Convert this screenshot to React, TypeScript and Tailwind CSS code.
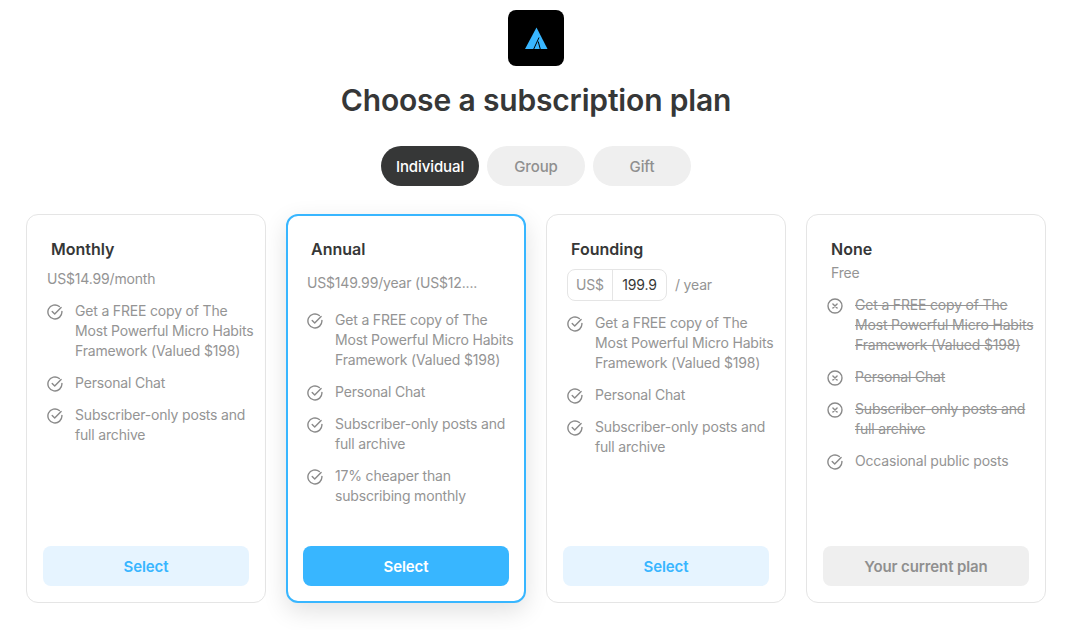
const FEATURES = ["Get a FREE copy of The Most Powerful Micro Habits Framework (Valued $198)", "Personal Chat", "Subscriber-only posts and full archive"];

function Check() {
  return (
    <svg width="16" height="16" viewBox="0 0 16 16" fill="none" stroke="#8a8a8a" strokeWidth="1.4" strokeLinecap="round" strokeLinejoin="round" className="mt-[3px] shrink-0">
      <path d="M14.9 7.4a7 7 0 1 1-2.6-4.9" />
      <path d="M5.2 7.5l2.5 2.5 6.4-6.6" />
    </svg>
  );
}

function Cross() {
  return (
    <svg width="16" height="16" viewBox="0 0 16 16" fill="none" stroke="#8a8a8a" strokeWidth="1.4" strokeLinecap="round" className="mt-[3px] shrink-0">
      <circle cx="8" cy="8" r="7" />
      <path d="M5.9 5.9l4.2 4.2M10.1 5.9l-4.2 4.2" />
    </svg>
  );
}

function Item({ text, off }: { text: string; off?: boolean }) {
  return (
    <li className="flex gap-3 text-[14px] leading-5 tracking-[-0.18px] text-[#949494]">
      {off ? <Cross /> : <Check />}
      <span className={off ? "line-through" : ""}>{text}</span>
    </li>
  );
}

function Card({ title, children, items, button, highlight }: { title: string; children: React.ReactNode; items: React.ReactNode; button: React.ReactNode; highlight?: boolean }) {
  return (
    <div className={highlight ? "flex w-[240px] h-[389px] flex-col rounded-xl border-2 border-[#38b6ff] bg-white px-[15px] pt-[23px] pb-[15px] shadow-[0_8px_24px_rgba(0,0,0,0.12)]" : "flex w-[240px] h-[389px] flex-col rounded-xl border border-[#e5e5e5] bg-white px-4 pt-6 pb-4"}>
      <h2 className="ml-2 text-[16px] leading-5 font-semibold tracking-[0px] text-[#363737]">{title}</h2>
      {children}
      <ul className="-mr-2 ml-1 flex flex-1 flex-col gap-3">{items}</ul>
      {button}
    </div>
  );
}

function SelectButton({ primary }: { primary?: boolean }) {
  return (
    <button className={primary ? "h-10 w-full rounded-lg bg-[#38b6ff] pt-[2px] text-[15px] font-semibold tracking-[-0.1px] text-white" : "h-10 w-full rounded-lg bg-[#e6f4ff] pt-[2px] text-[15px] font-semibold tracking-[-0.1px] text-[#38b6ff]"}>Select</button>
  );
}

export default function App() {
  return (
    <div className="flex h-[630px] w-[1072px] flex-col items-center overflow-hidden bg-white pt-[10px] font-['Inter',sans-serif]">
      <div className="flex h-14 w-14 items-center justify-center rounded-lg bg-black">
        <svg width="24" height="24" viewBox="0 0 24 24">
          <path d="M12.5 1.5L23.5 23H1Z" fill="#38b6ff" />
          <path d="M15 11.5L9.5 23.5M14.2 15.5L16.4 23.5" stroke="#000" strokeWidth="1" fill="none" />
        </svg>
      </div>
      <h1 className="mt-[16px] text-[30px] leading-9 font-semibold tracking-[-0.16px] text-[#363737]">Choose a subscription plan</h1>
      <div className="mt-[28px] flex gap-2">
        <button className="h-10 w-[98px] rounded-[20px] bg-[#363737] pt-[2px] text-[15px] font-medium tracking-[-0.1px] text-white">Individual</button>
        <button className="h-10 w-[98px] rounded-[20px] bg-[#efefef] pt-[2px] text-[15px] font-medium tracking-[-0.1px] text-[#8f8f8f]">Group</button>
        <button className="h-10 w-[98px] rounded-[20px] bg-[#efefef] pt-[2px] text-[15px] font-medium tracking-[-0.1px] text-[#8f8f8f]">Gift</button>
      </div>
      <div className="mt-[28px] flex gap-5">
        <Card
          title="Monthly"
          items={FEATURES.map((f) => <Item key={f} text={f} />)}
          button={<SelectButton />}
        >
          <p className="mt-[10px] mb-[12px] ml-1 text-[14px] leading-5 tracking-[-0.18px] text-[#949494]">US$14.99/month</p>
        </Card>
        <Card
          highlight
          title="Annual"
          items={[...FEATURES, "17% cheaper than subscribing monthly"].map((f) => <Item key={f} text={f} />)}
          button={<SelectButton primary />}
        >
          <p className="mt-[14px] mb-[17px] ml-1 truncate text-[14px] leading-5 tracking-[-0.18px] text-[#949494]">US$149.99/year (US$12....</p>
        </Card>
        <Card
          title="Founding"
          items={FEATURES.map((f) => <Item key={f} text={f} />)}
          button={<SelectButton />}
        >
          <div className="mt-[10px] mb-[12px] ml-1 flex items-center gap-2 text-[14px] leading-[18px] tracking-[-0.18px] text-[#949494]">
            <div className="flex h-8 w-[100px] items-center rounded-lg border border-[#e5e5e5]">
              <span className="flex h-full w-[45px] items-center justify-center border-r border-[#e5e5e5]">US$</span>
              <span className="flex-1 text-center text-[#363737]">199.9</span>
            </div>
            <span className="-mt-[1px]">/ year</span>
          </div>
        </Card>
        <Card
          title="None"
          items={
            <>
              {FEATURES.map((f) => <Item key={f} text={f} off />)}
              <Item text="Occasional public posts" />
            </>
          }
          button={<button className="h-10 w-full rounded-lg bg-[#efefef] pt-[2px] text-[15px] font-semibold tracking-[-0.1px] text-[#8f8f8f]">Your current plan</button>}
        >
          <p className="mt-[4px] mb-[12px] ml-2 text-[14px] leading-5 tracking-[-0.18px] text-[#949494]">Free</p>
        </Card>
      </div>
    </div>
  );
}
